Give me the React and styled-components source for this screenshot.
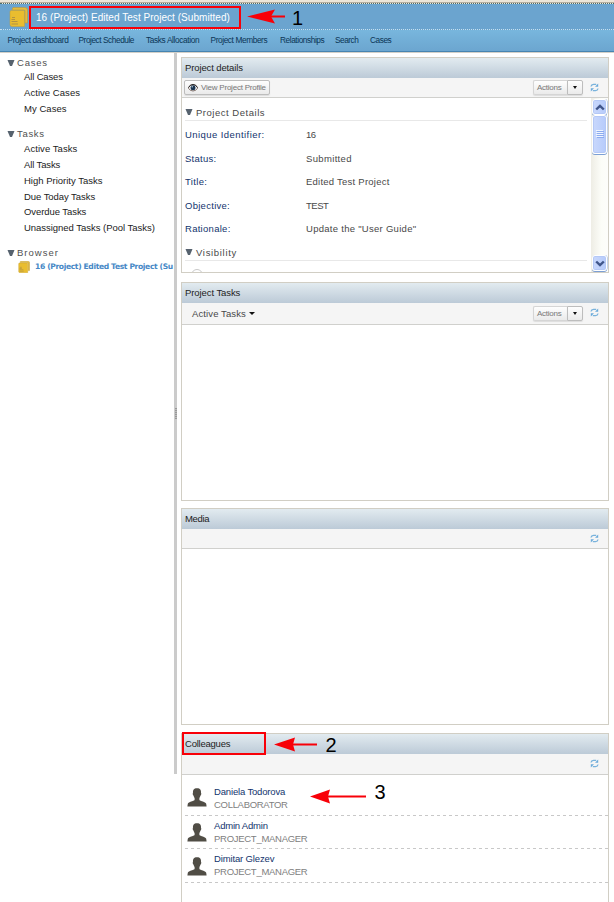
import React from "react";
import styled, { createGlobalStyle } from "styled-components";

const Global = createGlobalStyle`
  * { box-sizing: border-box; }
  html, body { margin: 0; padding: 0; background: #fff; }
  body { overflow: hidden; font: 9.5px "Liberation Sans", Arial, sans-serif; }
  svg { flex: none; }
`;

const Page = styled.div`
  position: relative;
  width: 614px;
  height: 902px;
  overflow: hidden;
  display: flex;
  flex-direction: column;
  background: #fff;
`;

const Text = styled.span`
  display: block;
  white-space: nowrap;
  letter-spacing: ${(p) => p.$ls || 0}px;
`;

const TopStrip = styled.div`
  flex: none;
  height: 4px;
  background: #ece6d9;
  border-bottom: 1px dotted #4c6c66;
  box-shadow: inset 0 -1px 0 #b5aea0;
`;

const TitleBar = styled.header`
  flex: none;
  height: 26px;
  display: flex;
  align-items: center;
  gap: 8px;
  padding-left: 9px;
  background: #6ba4cf;
  border-bottom: 1px dotted #c5e0f0;
  color: #fff;
  font-size: 10px;
`;

const PageTitle = styled(Text)`
  padding-top: 2px;
`;

const Nav = styled.nav`
  flex: none;
  height: 23px;
  position: relative;
  background: linear-gradient(#78b6dd, #6ba5cf);
  border-bottom: 1px solid #d3d0c8;
  box-shadow: inset 0 -1px 0 #4684b1;
  display: flex;
  padding-left: 7.5px;
  color: #0b3556;
  font-size: 8.3px;
  line-height: 21px;
`;

const NavItem = styled(Text)`
  flex: none;
  width: ${(p) => p.$w}px;
`;

const Body = styled.div`
  flex: 1;
  display: flex;
  min-height: 0;
`;

const Sidebar = styled.aside`
  width: 174px;
  flex: none;
  overflow: hidden;
  padding-top: 3px;
`;

const Group = styled.section`
  margin-bottom: ${(p) => p.$gap || 0}px;
`;

const GroupHead = styled.div`
  height: ${(p) => p.$h}px;
  display: flex;
  align-items: center;
  gap: 2px;
  padding-left: 7px;
  font-size: 9.5px;
  line-height: 16px;
  color: #505050;
`;

const SideItem = styled(Text)`
  height: 15.8px;
  line-height: 16px;
  padding-left: 24px;
  color: #222;
`;

const TreeItem = styled.div`
  display: flex;
  align-items: center;
  gap: 5px;
  height: 13px;
  padding-left: 18px;
  color: #4688c6;
  font: bold 7.6px "DejaVu Sans", Verdana, sans-serif;
`;

const Splitter = styled.div`
  flex: none;
  width: 3px;
  height: 721px;
  background: #cbcbcb;
  display: flex;
  align-items: center;
`;

const Grip = styled.div`
  width: 2px;
  height: 11px;
  margin: 0 0 0 1px;
  background: repeating-linear-gradient(#999 0 1px, #bbb 1px 2px);
`;

const Main = styled.main`
  flex: none;
  width: 432px;
  padding: 4px 0 0 4px;
  display: flex;
  flex-direction: column;
`;

const Panel = styled.section`
  flex: none;
  height: ${(p) => p.$h}px;
  margin-bottom: ${(p) => p.$gap}px;
  border: 1px solid #d1cec4;
  display: flex;
  flex-direction: column;
  overflow: hidden;
`;

const PanelTitle = styled.h2`
  flex: none;
  height: 20px;
  margin: 0;
  padding-left: 3px;
  background: linear-gradient(#e2ebf0, #bccad7);
  font-size: 9.5px;
  font-weight: 400;
  line-height: 20px;
  color: #222;
`;

const Toolbar = styled.div`
  flex: none;
  height: ${(p) => p.$h}px;
  display: flex;
  align-items: flex-start;
  padding: 2px 9px 0 2px;
  background: #f5f5f5;
  border-bottom: 1px solid #d0d0cd;
`;

const Spacer = styled.div`
  flex: 1;
`;

const Button = styled.button`
  height: 15px;
  margin: 0;
  padding: 0 3px;
  display: flex;
  align-items: center;
  gap: 3px;
  border: 1px solid #bdbdbd;
  border-radius: 2px;
  background: linear-gradient(#fefefe, #eaeaea);
  box-shadow: 0 1px 1px #ddd;
  color: #777;
  font: 8px "Liberation Sans", Arial, sans-serif;
`;

const ActionsLabel = styled(Button)`
  width: 34px;
  border-color: #d5d5d5;
  border-right: 0;
  border-radius: 2px 0 0 2px;
`;

const ActionsMenu = styled(Button)`
  width: 16px;
  justify-content: center;
  padding: 0;
  border-radius: 0 2px 2px 0;
`;

const ActionsGroup = styled.div`
  display: flex;
  padding-top: ${(p) => p.$top || 0}px;
`;

const RefreshSlot = styled.div`
  width: 10px;
  height: 11px;
  margin: 3px -1px 0 7px;
  svg { display: block; }
`;

const FilterLabel = styled.div`
  display: flex;
  align-items: center;
  gap: 3px;
  height: 17px;
  padding-left: 8px;
  color: #484848;
`;

const Details = styled.div`
  flex: 1;
  display: flex;
  min-height: 0;
`;

const DetailList = styled.div`
  flex: 1;
  padding: 6px 4px 0 3px;
  overflow: hidden;
`;

const SectionHead = styled.div`
  height: 17px;
  display: flex;
  align-items: center;
  gap: 3px;
  border-bottom: 1px solid #e8e8e8;
  color: #484848;
`;

const Fields = styled.div`
  padding: 2px 0 3.5px;
`;

const Field = styled.div`
  display: flex;
  align-items: center;
  height: 23.5px;
`;

const FieldName = styled(Text)`
  width: 121px;
  color: #12346d;
`;

const FieldValue = styled(Text)`
  color: #484848;
`;

const Placeholder = styled.div`
  width: 12px;
  height: 12px;
  margin: 8px 0 0 6px;
  border: 1px solid #c9c9c9;
  border-radius: 50%;
`;

const Scrollbar = styled.div`
  flex: none;
  width: 17px;
  display: flex;
  flex-direction: column;
  justify-content: space-between;
  padding: 1px;
  background: linear-gradient(90deg, #eeede5, #fcfdf8 60%, #fdfdfb);
`;

const ScrollPart = styled.div`
  height: ${(p) => p.$h}px;
  display: flex;
  align-items: center;
  justify-content: center;
  background: linear-gradient(90deg, #c9d8fc, #b6cbfb);
  border: 1px solid #fff;
  border-radius: 3px;
  box-shadow: inset 0 0 0 1px #b4c8f6, 0 1px 0 #7c9fd4, 0.5px 0 0 #8caade;
`;

const People = styled.div`
  padding-left: 3px;
`;

const Person = styled.div`
  display: flex;
  align-items: center;
  gap: 7px;
  height: ${(p) => p.$h}px;
  padding: ${(p) => p.$top}px 0 0 2px;
  background: repeating-linear-gradient(90deg, #c8c8c8 0 3px, transparent 3px 6px) bottom / 100% 1px no-repeat;
`;

const PersonText = styled.div`
  padding-bottom: ${(p) => p.$lift}px;
`;

const PersonName = styled(Text)`
  line-height: 13px;
  color: #12346d;
`;

const PersonRole = styled(Text)`
  line-height: 13px;
  color: #808080;
`;

/* Callouts laid over the page */
const Highlight = styled.div`
  position: absolute;
  left: ${(p) => p.$x}px;
  top: ${(p) => p.$y}px;
  width: ${(p) => p.$w}px;
  height: ${(p) => p.$h}px;
  border: 2px solid #f80008;
`;

const Callout = styled.div`
  position: absolute;
  left: ${(p) => p.$x}px;
  top: ${(p) => p.$y}px;
  font: 20px/20px "Liberation Sans", Arial, sans-serif;
  color: #000;
  svg { display: block; }
`;

const Triangle = () => (
  <svg width="8" height="8" viewBox="0 0 8 8">
    <path d="M0.5 1H7.5L5 7H3Z" fill="#56626e" />
  </svg>
);

const Caret = ({ w = 6 }) => (
  <svg width={w} height="3" viewBox="0 0 6 3" preserveAspectRatio="none">
    <path d="M0 0H6L3 3Z" fill="#111" />
  </svg>
);

const Folders = ({ w, h }) => (
  <svg width={w} height={h} viewBox="0 0 19 20" preserveAspectRatio="none">
    <path d="M4 0.5H16Q18.5 0.5 18.5 3V16H16V4Q16 3 15 3H4Q2 3 4 0.5Z" fill="#e4bb3c" stroke="#b9973e" strokeWidth="0.6" />
    <path d="M2 3.5H14.5Q15.5 3.5 15.5 4.5V19.5H3Q1 19.5 1 17.5V5Q1 3.5 2 3.5Z" fill="#e9bd2f" stroke="#c49c33" strokeWidth="0.5" />
    <path d="M3 10.5H6M2.5 12.5H6M2.5 14.5H8.5M2.5 17H9" stroke="#b29342" strokeWidth="1.1" />
  </svg>
);

const Refresh = () => (
  <svg width="9" height="9" viewBox="0 0 9 9" fill="none">
    <path d="M1 3.5Q1.3 1.5 3.5 1.3H6.2" stroke="#79b3dc" strokeWidth="1.3" />
    <path d="M8.2 0.5V3.8H5Z" fill="#68a9da" />
    <path d="M8 5.5Q7.7 7.5 5.5 7.7H2.8" stroke="#79b3dc" strokeWidth="1.3" />
    <path d="M0.8 8.5V5.2H4Z" fill="#68a9da" />
  </svg>
);

const Eye = () => (
  <svg width="10" height="8" viewBox="0 0 10 8">
    <path d="M0.3 4Q2 0.5 5 0.5Q8 0.5 9.7 4Q8 7 5 7Q2 7 0.3 4Z" fill="#fff" stroke="#6a554c" strokeWidth="0.8" />
    <path d="M0.5 3.5Q2 0.5 5 0.5Q8 0.5 9.5 3.5" fill="none" stroke="#222" />
    <circle cx="5" cy="3.7" r="2.5" fill="#173350" />
    <circle cx="4.2" cy="2.8" r="0.7" fill="#cfe4ef" />
  </svg>
);

const Chevron = ({ down }) => (
  <svg width="10" height="7" viewBox="0 0 10 7" fill="none">
    <path d={down ? "M1.2 1.5L5 5.2L8.8 1.5" : "M1.2 5.5L5 1.8L8.8 5.5"} stroke="#40568a" strokeWidth="2.4" />
  </svg>
);

const Gripper = () => (
  <svg width="8" height="9" viewBox="0 0 8 9">
    <path d="M0 .5H7M0 2.5H7M0 4.5H7M0 6.5H7" stroke="#f0f5ff" />
    <path d="M1 1.5H8M1 3.5H8M1 5.5H8M1 7.5H8" stroke="#8cabef" />
  </svg>
);

const Avatar = () => (
  <svg width="20" height="19" viewBox="0 0 20 19">
    <path
      d="M10 0.3C6.8 0.3 5.7 2.3 6 4.9C5.3 5.2 5.9 7.3 6.5 7.5C6.8 8.8 7.2 9.5 7.6 10.1V12.1C6.5 13.5 1.6 13.7 0.8 15.8L0.4 18.5H19.6L19.2 15.8C18.4 13.7 13.5 13.5 12.4 12.1V10.1C12.8 9.5 13.2 8.8 13.5 7.5C14.1 7.3 14.7 5.2 14 4.9C14.3 2.3 13.2 0.3 10 0.3Z"
      fill="#504d45"
    />
  </svg>
);

const Arrow = ({ w, head, notch = 4 }) => (
  <svg width={w} height="15" viewBox={`0 0 ${w} 15`}>
    <path d={`M${head - notch} 7.5H${w}`} stroke="#f80008" strokeWidth="2" />
    <path d={`M0 7.5L${head} 0.5L${head - notch} 7.5L${head} 14.5Z`} fill="#f80008" />
  </svg>
);

const Actions = ({ top }) => (
  <ActionsGroup $top={top}>
    <ActionsLabel><Text $ls={-0.25}>Actions</Text></ActionsLabel>
    <ActionsMenu><Caret w={4} /></ActionsMenu>
  </ActionsGroup>
);

const RefreshButton = () => <RefreshSlot><Refresh /></RefreshSlot>;

const NAV = [
  ["Project dashboard", 71, -0.38], ["Project Schedule", 67.5, -0.45], ["Tasks Allocation", 64.5, -0.36],
  ["Project Members", 69.5, -0.4], ["Relationships", 55, -0.43], ["Search", 35, -0.5], ["Cases", 30, -0.45],
];

const CASES = [["All Cases", -0.14], ["Active Cases", 0.05], ["My Cases", 0.04]];
const TASKS = [
  ["Active Tasks", 0.06], ["All Tasks", -0.12], ["High Priority Tasks", 0],
  ["Due Today Tasks", -0.06], ["Overdue Tasks", -0.07], ["Unassigned Tasks (Pool Tasks)", -0.03],
];

const FIELDS = [
  ["Unique Identifier:", 0.43, "16", -0.6], ["Status:", 0.25, "Submitted", 0.34],
  ["Title:", 0.35, "Edited Test Project", 0.24], ["Objective:", 0.28, "TEST", -0.5],
  ["Rationale:", 0.28, 'Update the "User Guide"', 0.28],
];

const PEOPLE = [
  ["Daniela Todorova", -0.16, "COLLABORATOR", -0.3, 41, 4, 0],
  ["Admin Admin", -0.2, "PROJECT_MANAGER", -0.28, 33, 0, 2],
  ["Dimitar Glezev", -0.14, "PROJECT_MANAGER", -0.28, 34, 0, 2],
];

export default function App() {
  return (
    <Page>
      <Global />
      <TopStrip />
      <TitleBar>
        <Folders w={19} h={20} />
        <PageTitle $ls={0.04}>16 (Project) Edited Test Project (Submitted)</PageTitle>
      </TitleBar>
      <Nav>
        {NAV.map(([label, w, ls]) => <NavItem key={label} $w={w} $ls={ls}>{label}</NavItem>)}
      </Nav>
      <Body>
        <Sidebar>
          <Group $gap={10.4}>
            <GroupHead $h={13}><Triangle /><Text $ls={0.77}>Cases</Text></GroupHead>
            {CASES.map(([label, ls]) => <SideItem key={label} $ls={ls}>{label}</SideItem>)}
          </Group>
          <Group $gap={9.5}>
            <GroupHead $h={14.5}><Triangle /><Text $ls={0.68}>Tasks</Text></GroupHead>
            {TASKS.map(([label, ls]) => <SideItem key={label} $ls={ls}>{label}</SideItem>)}
          </Group>
          <Group>
            <GroupHead $h={14.5}><Triangle /><Text $ls={1.03}>Browser</Text></GroupHead>
            <TreeItem>
              <Folders w={12} h={12} />
              <Text $ls={-0.36}>16 (Project) Edited Test Project (Su</Text>
            </TreeItem>
          </Group>
        </Sidebar>
        <Splitter><Grip /></Splitter>
        <Main>
          <Panel $h={216} $gap={9}>
            <PanelTitle><Text $ls={-0.12}>Project details</Text></PanelTitle>
            <Toolbar $h={20}>
              <Button><Eye /><Text $ls={-0.22}>View Project Profile</Text></Button>
              <Spacer />
              <Actions />
              <RefreshButton />
            </Toolbar>
            <Details>
              <DetailList>
                <SectionHead><Triangle /><Text $ls={0.52}>Project Details</Text></SectionHead>
                <Fields>
                  {FIELDS.map(([name, nls, value, vls]) => (
                    <Field key={name}>
                      <FieldName $ls={nls}>{name}</FieldName>
                      <FieldValue $ls={vls}>{value}</FieldValue>
                    </Field>
                  ))}
                </Fields>
                <SectionHead><Triangle /><Text $ls={0.68}>Visibility</Text></SectionHead>
                <Placeholder />
              </DetailList>
              <Scrollbar>
                <div>
                  <ScrollPart $h={16}><Chevron /></ScrollPart>
                  <ScrollPart $h={39}><Gripper /></ScrollPart>
                </div>
                <ScrollPart $h={16}><Chevron down /></ScrollPart>
              </Scrollbar>
            </Details>
          </Panel>
          <Panel $h={219} $gap={7}>
            <PanelTitle><Text $ls={-0.08}>Project Tasks</Text></PanelTitle>
            <Toolbar $h={22}>
              <FilterLabel><Text $ls={0.11}>Active Tasks</Text><Caret /></FilterLabel>
              <Spacer />
              <Actions top={1} />
              <RefreshButton />
            </Toolbar>
          </Panel>
          <Panel $h={217} $gap={8}>
            <PanelTitle><Text $ls={-0.34}>Media</Text></PanelTitle>
            <Toolbar $h={20}><Spacer /><RefreshButton /></Toolbar>
          </Panel>
          <Panel $h={180} $gap={0}>
            <PanelTitle><Text $ls={-0.23}>Colleagues</Text></PanelTitle>
            <Toolbar $h={21}><Spacer /><RefreshButton /></Toolbar>
            <People>
              {PEOPLE.map(([name, nls, role, rls, h, top, lift]) => (
                <Person key={name} $h={h} $top={top}>
                  <Avatar />
                  <PersonText $lift={lift}>
                    <PersonName $ls={nls}>{name}</PersonName>
                    <PersonRole $ls={rls}>{role}</PersonRole>
                  </PersonText>
                </Person>
              ))}
            </People>
          </Panel>
        </Main>
      </Body>
      <Highlight $x={29} $y={6} $w={212} $h={23} />
      <Callout $x={247} $y={9}><Arrow w={38} head={28} /></Callout>
      <Callout $x={292} $y={8}>1</Callout>
      <Highlight $x={182} $y={732} $w={84} $h={23} />
      <Callout $x={274} $y={737}><Arrow w={43} head={21} notch={2} /></Callout>
      <Callout $x={325.5} $y={735}>2</Callout>
      <Callout $x={310} $y={789}><Arrow w={56} head={20} notch={2} /></Callout>
      <Callout $x={374.5} $y={782}>3</Callout>
    </Page>
  );
}
